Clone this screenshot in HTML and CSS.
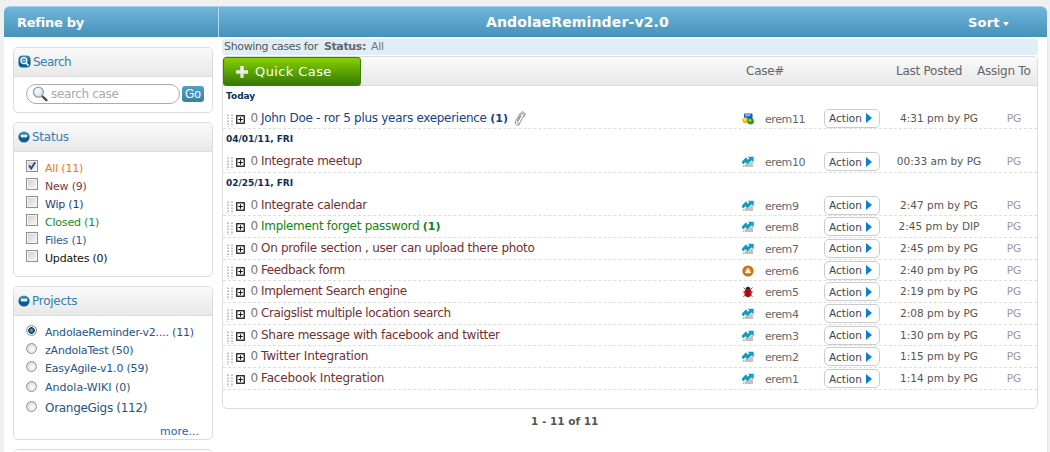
FILE: index.html
```html
<!DOCTYPE html>
<html lang="en">
<head>
<meta charset="utf-8">
<title>AndolaeReminder-v2.0</title>
<link rel="stylesheet" href="styles.css">
</head>
<body>
<svg class="defs" width="0" height="0">
  <defs>
    <linearGradient id="ball" x1="0" y1="0" x2="0" y2="1"><stop offset="0" stop-color="#3f93c0"/><stop offset=".5" stop-color="#0b5b92"/><stop offset="1" stop-color="#0a5f98"/></linearGradient>
    <linearGradient id="plusg" x1="0" y1="0" x2="0" y2="1"><stop offset="0" stop-color="#fff"/><stop offset="1" stop-color="#d5dccb"/></linearGradient>
    <radialGradient id="lens" cx=".4" cy=".35" r=".7"><stop offset="0" stop-color="#fff"/><stop offset="1" stop-color="#c3dcf2"/></radialGradient>
    <symbol id="minus" viewBox="0 0 12 12"><circle cx="6" cy="6" r="5.6" fill="url(#ball)"/><rect x="2.6" y="3.6" width="6.8" height="2.8" rx=".8" fill="#d9edf7"/></symbol>
    <symbol id="expand" viewBox="0 0 9 9"><rect x=".75" y=".75" width="7.5" height="7.5" fill="#fff" stroke="#1c1c1c" stroke-width="1.3"/><path d="M2.3 4.5h4.4M4.5 2.3v4.4" stroke="#111" stroke-width="1.1"/></symbol>
    <symbol id="grip" viewBox="0 0 6 13"><path d="M1 .5v13M5 .5v13" stroke="#aaa" stroke-width="1.5" stroke-dasharray="1.4 1.6"/></symbol>
    <symbol id="chart" viewBox="0 0 12 12"><path d="M1.7 11V9.200M4 11V7.800M6 11V8M8 11V6.5M10 11V5.5" stroke="#b3b3b3" stroke-width="1.6"/><path d="M.3 7.300 3.800 3.600l1.700 2.600L9 2.800" fill="none" stroke="#129cbb" stroke-width="3"/><path d="M5.800 .7h5.900v5.600z" fill="#0d9ce2"/></symbol>
    <symbol id="blocks" viewBox="0 0 12 12"><rect x="2" y=".5" width="8.500" height="6.500" rx="1" fill="#1a4fc4"/><path d="M3 1h6l-1 2.400H3z" fill="#70aef4"/><circle cx="3.400" cy="7.300" r="3" fill="#f0b90b"/><circle cx="2.800" cy="6.500" r="1.200" fill="#ffe779"/><circle cx="8.600" cy="8.200" r="3.300" fill="#2b9c22"/><circle cx="8" cy="7.300" r="1.200" fill="#9bdf70"/></symbol>
    <symbol id="up" viewBox="0 0 12 12"><circle cx="6" cy="6" r="5.6" fill="#cf700c"/><circle cx="6" cy="6" r="3.5" fill="#e28a28"/><path d="M6 2.5 9 7.9H3z" fill="#fff"/></symbol>
    <symbol id="bug" viewBox="0 0 12 12"><path d="M1.4 1.5 4 4M10.6 1.5 8 4M.9 6h10.2M1.4 11 4 8M10.6 11 8 8" stroke="#655" stroke-width=".9"/><ellipse cx="6" cy="6.7" rx="3.8" ry="4.5" fill="#cf141c"/><path d="M3.6 3.1C3.8 0 8.2 0 8.4 3.1z" fill="#222"/><path d="M6 3v8" stroke="#350608" stroke-width=".7"/><g fill="#38080a"><circle cx="4.3" cy="5.6" r=".7"/><circle cx="7.7" cy="5.6" r=".7"/><circle cx="4.5" cy="8.4" r=".7"/><circle cx="7.5" cy="8.4" r=".7"/></g></symbol>
  </defs>
</svg>
<div class="app">
  <header class="bar">
    <div class="bar-left">Refine by</div>
    <div class="bar-title"><span>AndolaeReminder-v2.0</span></div>
    <div class="bar-sort"><span>Sort</span><i class="caret"></i></div>
  </header>
  <div class="columns">
    <aside class="side">
      <section class="card card-search">
        <h2 class="card-head"><svg width="13" height="13" viewBox="0 0 13 13"><rect x=".5" y=".5" width="12" height="12" rx="4" fill="url(#ball)"/><circle cx="5.9" cy="5.7" r="3" fill="#3c8bbb" stroke="#fff" stroke-width="1.3"/><path d="m8 8 2.6 2.6" stroke="#fff" stroke-width="1.7"/><path d="M4.4 5.7h3" stroke="#fff" stroke-width=".8"/></svg><span>Search</span></h2>
        <div class="search-row">
          <div class="search-box"><svg width="16" height="16" viewBox="0 0 16 16"><path d="m10 10 4.4 4.2" stroke="#4b4b55" stroke-width="2.4" stroke-linecap="round"/><circle cx="6.4" cy="6.2" r="5" fill="url(#lens)" stroke="#989cad" stroke-width="1.3"/></svg><span>search case</span></div>
          <div class="go">Go</div>
        </div>
      </section>
      <section class="card card-status">
        <h2 class="card-head"><svg width="12" height="12"><use href="#minus"/></svg><span>Status</span></h2>
        <ul class="options">
          <li><i class="check"><svg width="10" height="10" viewBox="0 0 10 10"><path d="M2 4.4 4.2 7.6 8.2 1.2" fill="none" stroke="#35478c" stroke-width="1.9"/></svg></i><span class="c-orange">All (11)</span></li>
          <li><i class="check"></i><span class="c-maroon">New (9)</span></li>
          <li><i class="check"></i><span class="c-navy">Wip (1)</span></li>
          <li><i class="check"></i><span class="c-green">Closed (1)</span></li>
          <li><i class="check"></i><span class="c-steel">Files (1)</span></li>
          <li><i class="check"></i><span class="c-black">Updates (0)</span></li>
        </ul>
      </section>
      <section class="card card-projects">
        <h2 class="card-head"><svg width="12" height="12"><use href="#minus"/></svg><span>Projects</span></h2>
        <ul class="options projects">
          <li><i class="radio on"></i><span>AndolaeReminder-v2.... (11)</span></li>
          <li><i class="radio"></i><span>zAndolaTest (50)</span></li>
          <li><i class="radio"></i><span>EasyAgile-v1.0 (59)</span></li>
          <li class="tall"><i class="radio"></i><span class="wiki">Andola-WIKI (0)</span></li>
          <li class="tall"><i class="radio"></i><span class="gigs">OrangeGigs (112)</span></li>
        </ul>
        <div class="more">more...</div>
      </section>
      <section class="card card-next"><h2 class="card-head"></h2></section>
    </aside>
    <main class="main">
      <div class="filter"><span class="f1">Showing cases for</span><b>Status:</b><span class="f2">All</span></div>
      <div class="table">
        <div class="thead">
          <div class="quick"><svg width="14" height="14" viewBox="0 0 14 14"><path d="M5.3 1h3.4v4.3H13v3.4H8.7V13H5.3V8.7H1V5.3h4.3z" fill="url(#plusg)"/></svg><span>Quick Case</span></div>
          <span class="h-case">Case#</span><span class="h-posted">Last Posted</span><span class="h-assign">Assign To</span>
        </div>
        <div class="tbody">
          <div class="day today">Today</div>
          <div class="row"><svg class="grip"><use href="#grip"/></svg><svg class="expand"><use href="#expand"/></svg><span class="zero">0</span><span class="title blue">John Doe - ror 5 plus years exeperience <b>(1)</b><svg class="clip" width="12" height="15" viewBox="0 0 12 15"><path d="M3.400 9.800 6.800 3.600C8 1.600 10.800 2.400 9.800 4.800L6 11.600c-1 1.600-3 .8-2.200-1.200L7 5M10.400 5.500 11 3.800C11.300 .9 8 .1 6.600 2L1.700 9.800c-1.600 3.400 2 5.600 4.200 3.400" fill="none" stroke="#8a8a8a" stroke-width="1"/></svg></span><svg class="type"><use href="#blocks"/></svg><span class="case">erem11</span><span class="action">Action<i></i></span><span class="when">4:31 pm by PG</span><span class="who">PG</span></div>
          <div class="day">04/01/11, FRI</div>
          <div class="row"><svg class="grip"><use href="#grip"/></svg><svg class="expand"><use href="#expand"/></svg><span class="zero">0</span><span class="title">Integrate meetup</span><svg class="type"><use href="#chart"/></svg><span class="case">erem10</span><span class="action">Action<i></i></span><span class="when">00:33 am by PG</span><span class="who">PG</span></div>
          <div class="day">02/25/11, FRI</div>
          <div class="row"><svg class="grip"><use href="#grip"/></svg><svg class="expand"><use href="#expand"/></svg><span class="zero">0</span><span class="title">Integrate calendar</span><svg class="type"><use href="#chart"/></svg><span class="case">erem9</span><span class="action">Action<i></i></span><span class="when">2:47 pm by PG</span><span class="who">PG</span></div>
          <div class="row"><svg class="grip"><use href="#grip"/></svg><svg class="expand"><use href="#expand"/></svg><span class="zero">0</span><span class="title green">Implement forget password <b>(1)</b></span><svg class="type"><use href="#chart"/></svg><span class="case">erem8</span><span class="action">Action<i></i></span><span class="when">2:45 pm by DIP</span><span class="who">PG</span></div>
          <div class="row"><svg class="grip"><use href="#grip"/></svg><svg class="expand"><use href="#expand"/></svg><span class="zero">0</span><span class="title">On profile section , user can upload there photo</span><svg class="type"><use href="#chart"/></svg><span class="case">erem7</span><span class="action">Action<i></i></span><span class="when">2:45 pm by PG</span><span class="who">PG</span></div>
          <div class="row"><svg class="grip"><use href="#grip"/></svg><svg class="expand"><use href="#expand"/></svg><span class="zero">0</span><span class="title tight">Feedback form</span><svg class="type"><use href="#up"/></svg><span class="case">erem6</span><span class="action">Action<i></i></span><span class="when">2:40 pm by PG</span><span class="who">PG</span></div>
          <div class="row"><svg class="grip"><use href="#grip"/></svg><svg class="expand"><use href="#expand"/></svg><span class="zero">0</span><span class="title tight">Implement Search engine</span><svg class="type"><use href="#bug"/></svg><span class="case">erem5</span><span class="action">Action<i></i></span><span class="when">2:19 pm by PG</span><span class="who">PG</span></div>
          <div class="row"><svg class="grip"><use href="#grip"/></svg><svg class="expand"><use href="#expand"/></svg><span class="zero">0</span><span class="title tight">Craigslist multiple location search</span><svg class="type"><use href="#chart"/></svg><span class="case">erem4</span><span class="action">Action<i></i></span><span class="when">2:08 pm by PG</span><span class="who">PG</span></div>
          <div class="row"><svg class="grip"><use href="#grip"/></svg><svg class="expand"><use href="#expand"/></svg><span class="zero">0</span><span class="title">Share message with facebook and twitter</span><svg class="type"><use href="#chart"/></svg><span class="case">erem3</span><span class="action">Action<i></i></span><span class="when">1:30 pm by PG</span><span class="who">PG</span></div>
          <div class="row"><svg class="grip"><use href="#grip"/></svg><svg class="expand"><use href="#expand"/></svg><span class="zero">0</span><span class="title loose">Twitter Integration</span><svg class="type"><use href="#chart"/></svg><span class="case">erem2</span><span class="action">Action<i></i></span><span class="when">1:15 pm by PG</span><span class="who">PG</span></div>
          <div class="row"><svg class="grip"><use href="#grip"/></svg><svg class="expand"><use href="#expand"/></svg><span class="zero">0</span><span class="title loose">Facebook Integration</span><svg class="type"><use href="#chart"/></svg><span class="case">erem1</span><span class="action">Action<i></i></span><span class="when">1:14 pm by PG</span><span class="who">PG</span></div>
        </div>
      </div>
      <div class="pager">1 - 11 of 11</div>
    </main>
  </div>
</div>
</body>
</html>
```
FILE: styles.css
```css
* { box-sizing: border-box; }
body { margin: 0; background: #f0f0f0; font: 11px/14px Verdana, "DejaVu Sans", sans-serif; color: #555; }
h2, ul { margin: 0; padding: 0; font-weight: normal; list-style: none; }
i { font-style: normal; }
span, b { white-space: nowrap; }
svg { display: block; flex: none; }
.defs { position: absolute; }

.app { padding: 6px 2px 0 4px; height: 452px; overflow: hidden; }
.bar { display: flex; height: 31px; width: 1043px; line-height: 31px; border-top: 1px solid #a4d2e9; border-radius: 6px 6px 0 0; background: linear-gradient(#72b5db, #4592ba); color: #fff; font-weight: bold; }
.bar-left { width: 215px; padding-left: 13px; border-right: 1px solid #b5dcee; font-size: 13px; letter-spacing: -.25px; }
.bar-title { flex: 1; padding-left: 267px; font-size: 14px; letter-spacing: .15px; line-height: 30px; }
.bar-sort { display: flex; align-items: center; gap: 3px; width: 79px; font-size: 13px; letter-spacing: .2px; }
.caret { border: 3.5px solid transparent; border-top: 4px solid #fff; border-bottom: 0; margin-top: 3px; }
.columns { display: flex; width: 1044px; height: 415px; background: #fff; border-right: 1px solid #e6e6e6; overflow: hidden; }
.side { width: 218px; padding: 10px 0 0 9px; }

.card { width: 200px; margin-bottom: 10px; border: 1px solid #dcdcdc; border-radius: 5px; background: #fff; overflow: hidden; }
.card-search { height: 66px; margin-bottom: 9px; }
.card-status { height: 155px; margin-bottom: 9px; }
.card-projects { height: 154px; margin-bottom: 9px; }
.card-next { height: 20px; margin-bottom: 0; }
.card-head { display: flex; align-items: center; gap: 2px; height: 29px; padding: 0 0 1px 4px; border-bottom: 1px solid #dcdcdc; background: linear-gradient(#fafafa, #e8e8e8); color: #3580ab; font-size: 12px; letter-spacing: -.25px; }
.card-search .card-head { letter-spacing: -.5px; }
.search-row { display: flex; align-items: center; gap: 2px; padding: 7px 0 0 12px; }
.search-box { display: flex; align-items: center; gap: 3px; width: 154px; height: 20px; padding-left: 5px; border: 1px solid #ababab; border-radius: 10px; color: #a9a9a9; font-size: 12px; letter-spacing: -.35px; }
.go { width: 22px; height: 16px; border-radius: 3px; background: linear-gradient(#4fa0c8, #3d7ea0); color: #fff; font: 12px/17px "Liberation Sans", sans-serif; text-align: center; }
.options { padding: 8px 0 0 12px; }
.options li { display: flex; height: 18.1px; gap: 7px; }
.options span { padding-top: 2px; letter-spacing: -.2px; }
.check { width: 12px; height: 12px; border: 1px solid #8f8f8f; background: linear-gradient(135deg, #cfcfcf, #f8f8f8); box-shadow: inset 0 0 0 1px #f5f5f5; }
.projects { padding-top: 9px; color: #255486; }
.projects li { gap: 8px; }
.projects span { padding-top: 1px; }
.projects .tall { height: 20px; }
.projects .tall span { padding-top: 2px; }
.projects .wiki { letter-spacing: .03px; }
.projects .gigs { font-size: 12px; letter-spacing: -.3px; }
.radio { width: 11px; height: 11px; border: 1px solid #929292; border-radius: 50%; background: radial-gradient(circle at 60% 60%, #fff, #c9c9c9); }
.projects .tall .radio { margin-top: 2px; }
.radio.on { background: radial-gradient(circle, #58b9e5 0, #0b3254 3px, #eee 3.5px); }
.more { padding: 6px 13px 0 0; text-align: right; color: #1f62ae; }
.c-orange { color: #f0741a; } .c-maroon { color: #7c3a3a; } .c-navy { color: #16408a; }
.c-green { color: #1c8a1c; } .c-steel { color: #2b5d94; } .c-black { color: #111; }

.main { width: 816px; padding-top: 2px; }
.filter { display: flex; height: 16px; padding-left: 2px; border-radius: 3px; background: #dfeef6; font-size: 11px; line-height: 16px; letter-spacing: -.35px; }
.filter b { margin: 0 5px 0 6px; color: #666; }
.filter .f2 { color: #777; }
.table { height: 353px; margin-top: 1px; border: 1px solid #dcdcdc; border-radius: 5px; background: #fff; }
.thead { display: flex; height: 29px; border-bottom: 1px solid #dcdcdc; border-radius: 4px 4px 0 0; background: linear-gradient(#fafafa, #e8e8e8); font-size: 12px; line-height: 29px; color: #666; letter-spacing: -.25px; }
.quick { display: flex; align-items: center; gap: 6px; width: 138px; height: 29px; padding-left: 11px; border: 1px solid #3d7d08; border-radius: 3px; background: linear-gradient(#86d002, #347903); color: #fff; font-size: 13px; letter-spacing: .4px; }
.h-case { width: 150px; margin-left: 385px; }
.h-posted { width: 81px; }
.tbody { padding-top: .1px; }
.day { height: 21.7px; padding-left: 3px; line-height: 21px; font-size: 9px; font-weight: bold; color: #0d2f57; }
.row { display: grid; grid-template-columns: 9px 14.500px 10.500px 481px 23px 59px 56px 118px 32px; height: 21.7px; padding-left: 4px; border-bottom: 1px dashed #dedede; }
.grip { width: 6px; height: 13px; margin-top: 6px; }
.expand { width: 9px; height: 9px; margin-top: 7px; }
.zero, .title { padding-top: 3px; font-size: 12px; }
.zero { color: #777; }
.title { color: #712f31; letter-spacing: -.29px; }
.title.tight { letter-spacing: -.39px; }
.title.loose { letter-spacing: -.15px; }
.title b { font-size: 11px; letter-spacing: 0; }
.title.blue { color: #164184; } .title.green { color: #118411; }
.clip { display: inline-block; margin: -3px 0 -4px 6px; vertical-align: middle; }
.type { width: 12px; height: 12px; margin-top: 5px; }
.case { padding-top: 5px; font-size: 11px; color: #666; letter-spacing: -.4px; }
.action { display: flex; align-items: center; gap: 4px; height: 19px; margin-top: 1px; padding-left: 4px; border: 1px solid #ccc; border-radius: 5px; font-size: 10.5px; color: #444; }
.action i { border: 5px solid transparent; border-left: 6px solid #0b7ed6; border-right: 0; }
.when { padding-top: 3px; text-align: center; font-size: 10.5px; }
.who { padding-top: 3px; text-align: center; font-size: 10.5px; color: #999; }
.pager { padding-top: 5px; margin-left: 309px; font-size: 10.5px; font-weight: bold; }
```
